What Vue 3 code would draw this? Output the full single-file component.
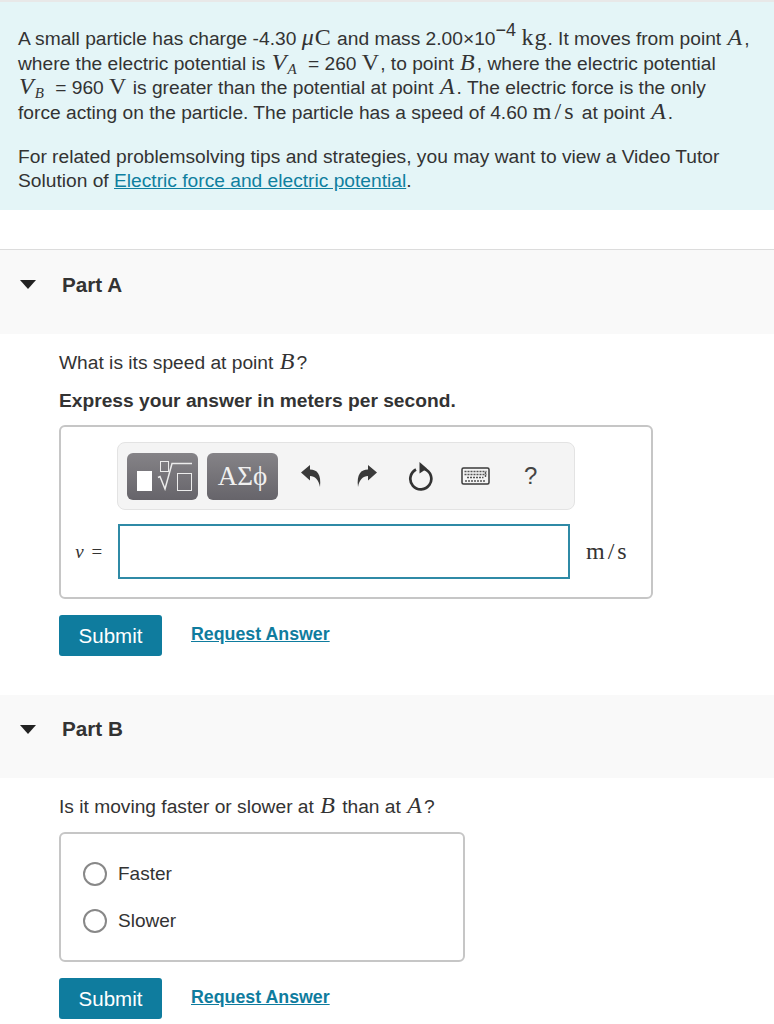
<script setup>
const parts = [
  { id: 'a', name: 'Part A' },
  { id: 'b', name: 'Part B' }
]
</script>

<template>
  <div class="page">
    <section class="intro">
      <p class="para">
        A small particle has charge -4.30 <span class="m"><i>μ</i>C</span> and mass 2.00×10<sup class="sup">−4</sup> <span class="m">kg</span>. It moves from point <i class="m">A</i>,<br />
        where the electric potential is <i class="m">V<sub class="sub">A</sub></i> = 260 <span class="m">V</span>, to point <i class="m">B</i>, where the electric potential<br />
        <i class="m">V<sub class="sub">B</sub></i> = 960 <span class="m">V</span> is greater than the potential at point <i class="m">A</i>. The electric force is the only<br />
        force acting on the particle. The particle has a speed of 4.60 <span class="m ms">m/s</span> at point <i class="m">A</i>.
      </p>
      <p class="para tips">
        For related problemsolving tips and strategies, you may want to view a Video Tutor<br />
        Solution of <a class="video" href="#">Electric force and electric potential</a>.
      </p>
    </section>

    <header class="part-head first">
      <span class="caret"></span>
      <h2 class="part-title">{{ parts[0].name }}</h2>
    </header>
    <section class="part-body">
      <p class="question">What is its speed at point <i class="m">B</i>?</p>
      <p class="express">Express your answer in meters per second.</p>
      <div class="answer-box">
        <div class="answer-label"><i>v</i> =</div>
        <div class="answer-main">
          <div class="toolbar">
            <button class="tool-btn templates" type="button" aria-label="Templates">
              <svg width="71" height="47" viewBox="0 0 71 47">
                <rect x="10" y="18" width="15" height="20" fill="#fff" />
                <rect x="33.500" y="8.500" width="8" height="10" fill="none" stroke="#ececec" stroke-width="1" />
                <path d="M31 24.500 L33 23.500 L38 36 L45 10.500 H65" fill="none" stroke="#ececec" stroke-width="1.500" />
                <rect x="50.500" y="20.500" width="14" height="17" fill="none" stroke="#ececec" stroke-width="1" />
              </svg>
            </button>
            <button class="tool-btn greek" type="button">ΑΣϕ</button>
            <svg class="icon undo" width="22" height="24" viewBox="0 0 22 24">
              <path d="M1 8.500 L10 1 V5.500 C17 5.500 21.500 10 20 23 C18.500 15.500 15 12 10 12 V16.500 Z" fill="#3a3a3a" />
            </svg>
            <svg class="icon redo" width="22" height="24" viewBox="0 0 22 24">
              <path d="M21 8.500 L12 1 V5.500 C5 5.500 0.500 10 2 23 C3.500 15.500 7 12 12 12 V16.500 Z" fill="#3a3a3a" />
            </svg>
            <svg class="icon reset" width="26" height="30" viewBox="0 0 26 30">
              <path d="M8 8.500 A10.500 10.500 0 1 0 16.500 8" fill="none" stroke="#333" stroke-width="2.700" />
              <path d="M11.500 1 L19 7.500 L11.500 12.500 Z" fill="#333" />
            </svg>
            <svg class="icon keyboard" width="30" height="20" viewBox="0 0 30 20">
              <rect x="1" y="2" width="27" height="16" rx="1.500" fill="#f4f4f4" stroke="#3a3a3a" stroke-width="1.500" />
              <path d="M3.500 5.500 H25.500 M3.500 8.500 H25.500 M6 11.500 H22.500 M24.500 6 V12 M4 15 H25" fill="none" stroke="#555" stroke-width="1.400" stroke-dasharray="2 1" />
            </svg>
            <span class="help">?</span>
          </div>
          <div class="input"></div>
        </div>
        <div class="answer-unit">m/s</div>
      </div>
      <div class="actions">
        <button class="submit" type="button">Submit</button>
        <a class="request" href="#">Request Answer</a>
      </div>
    </section>

    <header class="part-head">
      <span class="caret"></span>
      <h2 class="part-title">{{ parts[1].name }}</h2>
    </header>
    <section class="part-body second">
      <p class="question">Is it moving faster or slower at <i class="m">B</i> than at <i class="m">A</i>?</p>
      <div class="choices">
        <label class="choice"><span class="radio"></span>Faster</label>
        <label class="choice"><span class="radio"></span>Slower</label>
      </div>
      <div class="actions">
        <button class="submit" type="button">Submit</button>
        <a class="request" href="#">Request Answer</a>
      </div>
    </section>
  </div>
</template>

<style>
html, body { background: #fff; }
</style>

<style scoped>
.page {
  width: 774px;
  height: 1024px;
  overflow: hidden;
  background: #fff;
  font-family: "Liberation Sans", Arial, sans-serif;
  color: #333;
  font-size: 19.200px;
  border-top: 2px solid #e8e8e8;
  box-sizing: border-box;
}
.intro {
  background: #e4f5f7;
  height: 208px;
  padding: 25px 18px 0;
  box-sizing: border-box;
}
.para {
  margin: 0;
  line-height: 24.600px;
  white-space: nowrap;
}
.tips { margin-top: 19.500px; line-height: 24px; }
.m {
  font-family: "Liberation Serif", "DejaVu Serif", serif;
  font-size: 24px;
  line-height: 0;
  letter-spacing: 1px;
}
i.m { margin: 0 1px; }
.ms { letter-spacing: 3px; }
.sup { font-size: 18px; line-height: 0; vertical-align: 9px; }
.sub { font-size: 15px; line-height: 0; vertical-align: -4px; margin-right: 4px; }
.video { color: #0f7f9f; text-decoration: underline; }
.part-head {
  height: 83px;
  background: #f9f9f9;
  display: flex;
  align-items: center;
  padding: 0 0 15px 20px;
  box-sizing: border-box;
  gap: 26px;
}
.part-head.first {
  margin-top: 39px;
  border-top: 1px solid #dcdcdc;
  height: 85px;
}
.caret {
  width: 0;
  height: 0;
  border-left: 8px solid transparent;
  border-right: 8px solid transparent;
  border-top: 9px solid #222;
}
.part-title {
  margin: 0;
  font-size: 20.700px;
  font-weight: 700;
  color: #333;
}
.part-body {
  padding: 17px 0 0 59px;
  height: 361px;
  box-sizing: border-box;
}
.part-body.second { height: 246px; }
.question { margin: 0; line-height: 24px; }
.express {
  margin: 14px 0 0;
  font-weight: 700;
  line-height: 24px;
}
.answer-box {
  margin-top: 12px;
  width: 594px;
  height: 174px;
  box-sizing: border-box;
  border: 2px solid #c6c6c6;
  border-radius: 6px;
  display: flex;
  align-items: flex-end;
  padding-bottom: 18px;
}
.answer-label {
  width: 57px;
  height: 55px;
  line-height: 55px;
  text-align: center;
  font-family: "Liberation Serif", serif;
  font-size: 19px;
  letter-spacing: 1.500px;
}
.answer-main { width: 452px; }
.toolbar {
  height: 68px;
  box-sizing: border-box;
  background: #f4f4f4;
  border: 1px solid #e3e3e3;
  border-radius: 8px;
  display: flex;
  align-items: center;
  padding: 0 0 0 9px;
  margin: 0 0 14px -1px;
  width: 458px;
}
.tool-btn {
  flex: none;
  width: 71px;
  height: 47px;
  border: 0;
  border-radius: 6px;
  padding: 0;
  background: linear-gradient(#858387, #66646a);
  color: #f0f0f0;
  display: flex;
  align-items: center;
  justify-content: center;
  font-family: "Liberation Serif", serif;
  font-size: 27px;
}
.greek { margin-left: 9px; }
.icon { flex: none; }
.undo { margin-left: 22px; }
.redo { margin-left: 34px; }
.reset { margin-left: 30px; }
.keyboard { margin-left: 27px; }
.help { margin-left: 33px; font-size: 24px; color: #444; }
.input {
  height: 55px;
  box-sizing: border-box;
  width: 452px;
  border: 2px solid #2f8aa6;
}
.answer-unit {
  height: 55px;
  line-height: 55px;
  margin-left: 16px;
  font-family: "Liberation Serif", serif;
  font-size: 24px;
  letter-spacing: 3px;
}
.actions {
  margin-top: 16px;
  display: flex;
  align-items: center;
  gap: 29px;
}
.submit {
  width: 103px;
  height: 41px;
  padding: 0;
  border: 0;
  border-radius: 3px;
  background: #0f7c9e;
  color: #fff;
  font-family: "Liberation Sans", sans-serif;
  font-size: 20.500px;
}
.request {
  color: #0f7c9e;
  font-weight: 700;
  font-size: 17.800px;
  text-decoration: underline;
  padding-bottom: 2px;
}
.choices {
  margin-top: 13px;
  width: 406px;
  height: 130px;
  box-sizing: border-box;
  border: 2px solid #c6c6c6;
  border-radius: 6px;
  padding: 28px 0 0 22px;
  display: flex;
  flex-direction: column;
  gap: 23px;
}
.choice {
  display: flex;
  align-items: center;
  gap: 11px;
  height: 24px;
  font-size: 19px;
}
.radio {
  width: 24px;
  height: 24px;
  box-sizing: border-box;
  border: 2px solid #888;
  border-radius: 50%;
  background: #fff;
}
</style>
